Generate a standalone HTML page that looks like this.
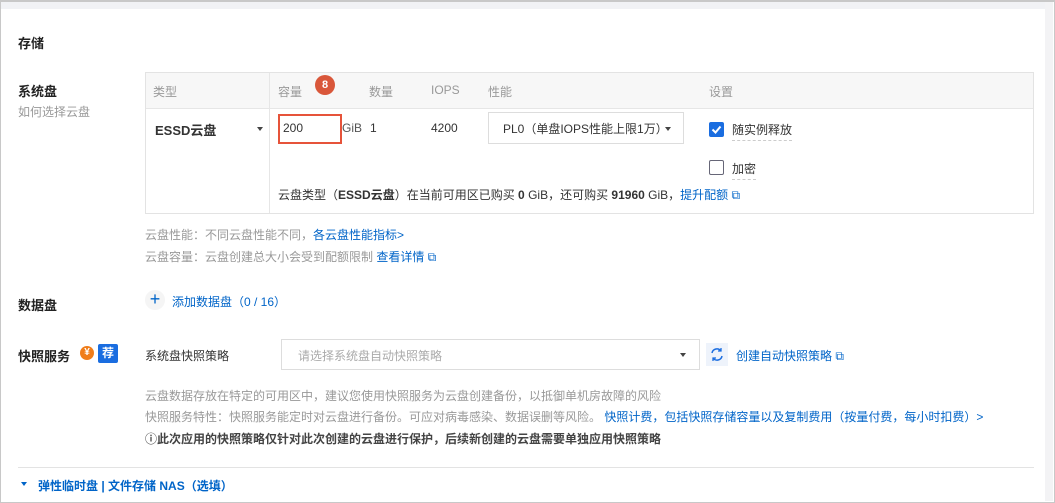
<!DOCTYPE html>
<html><head><meta charset="utf-8"><style>
*{margin:0;padding:0;box-sizing:border-box}
body{width:1055px;height:503px;background:#fff;font-family:"Liberation Sans","Noto Sans CJK SC",sans-serif;font-size:12px;color:#333;position:relative;overflow:hidden}
.a{position:absolute;white-space:nowrap}
.g{color:#999}.b{color:#0064c8}.k{color:#333}
.h{font-weight:bold;font-size:13px;color:#222}
.t{position:absolute;width:0;height:0;border-left:3px solid transparent;border-right:3px solid transparent;border-top:4px solid #444}
</style></head><body>
<div class="a" style="left:0;top:0;width:1055px;height:503px;border:1px solid #c8c8c8;border-top:2px solid #c8c8c8"></div>
<div class="a" style="left:1px;top:2px;width:1052px;height:7px;background:#f1f2f5"></div>
<div class="a" style="left:1045px;top:2px;width:8px;height:499px;background:#f3f3f5"></div>

<div class="a h" style="left:18px;top:33px">存储</div>
<div class="a h" style="left:18px;top:81px">系统盘</div>
<div class="a g" style="left:18px;top:103px">如何选择云盘</div>

<div class="a" style="left:145px;top:72px;width:889px;height:142px;border:1px solid #e3e3e3"></div>
<div class="a" style="left:146px;top:73px;width:887px;height:36px;background:#f7f7f7;border-bottom:1px solid #e6e6e6"></div>
<div class="a" style="left:269px;top:73px;width:1px;height:140px;background:#e6e6e6"></div>
<div class="a g" style="left:153px;top:83px">类型</div>
<div class="a g" style="left:278px;top:83px">容量</div>
<div class="a" style="left:315px;top:75px;width:20px;height:20px;border-radius:50%;background:#d9573a;color:#fff;font-size:11px;font-weight:bold;text-align:center;line-height:20px">8</div>
<div class="a g" style="left:369px;top:83px">数量</div>
<div class="a g" style="left:431px;top:83px">IOPS</div>
<div class="a g" style="left:488px;top:83px">性能</div>
<div class="a g" style="left:709px;top:83px">设置</div>

<div class="a" style="left:155px;top:120px;font-weight:bold;font-size:13px">ESSD云盘</div>
<div class="t" style="left:257px;top:127px"></div>
<div class="a" style="left:278px;top:114px;width:64px;height:30px;border:2px solid #e6533a"></div>
<div class="a" style="left:283px;top:121px">200</div>
<div class="a" style="left:342px;top:121px;color:#555">GiB</div>
<div class="a" style="left:370px;top:121px">1</div>
<div class="a" style="left:431px;top:121px">4200</div>
<div class="a" style="left:488px;top:112px;width:196px;height:32px;border:1px solid #ddd"></div>
<div class="a" style="left:503px;top:120px">PL0（单盘IOPS性能上限1万）</div>
<div class="t" style="left:665px;top:127px"></div>
<div class="a" style="left:709px;top:122px;width:15px;height:15px;background:#1a6de0;border-radius:2px"><svg width="15" height="15"><path d="M3.5 7.5l3 3 5-6" stroke="#fff" stroke-width="2" fill="none"/></svg></div>
<div class="a" style="left:732px;top:121px;border-bottom:1px dashed #ccc;padding-bottom:2px">随实例释放</div>
<div class="a" style="left:709px;top:160px;width:15px;height:15px;border:1px solid #667;border-radius:2px"></div>
<div class="a" style="left:732px;top:160px;border-bottom:1px dashed #ccc;padding-bottom:2px">加密</div>
<div class="a" style="left:278px;top:186px">云盘类型（<b>ESSD云盘</b>）在当前可用区已购买 <b>0</b> GiB，还可购买 <b>91960</b> GiB，<span class="b">提升配额 ⧉</span></div>

<div class="a g" style="left:145px;top:226px">云盘性能：不同云盘性能不同，<span class="b">各云盘性能指标&gt;</span></div>
<div class="a g" style="left:145px;top:248px">云盘容量：云盘创建总大小会受到配额限制 <span class="b">查看详情 ⧉</span></div>

<div class="a h" style="left:18px;top:295px">数据盘</div>
<div class="a" style="left:145px;top:290px;width:20px;height:20px;border-radius:50%;background:#f5f5f5;color:#0064c8;font-size:18px;text-align:center;line-height:19px">+</div>
<div class="a b" style="left:172px;top:293px">添加数据盘（0 / 16）</div>

<div class="a h" style="left:18px;top:346px">快照服务</div>
<div class="a" style="left:80px;top:346px;width:14px;height:14px;border-radius:50%;background:#f07d1a;color:#fff;font-size:10px;font-weight:bold;text-align:center;line-height:14px">¥</div>
<div class="a" style="left:98px;top:344px;width:20px;height:19px;background:#1a6de0;color:#fff;font-size:12px;font-weight:bold;text-align:center;line-height:19px;border-radius:2px">荐</div>
<div class="a k" style="left:145px;top:347px">系统盘快照策略</div>
<div class="a" style="left:281px;top:339px;width:419px;height:31px;border:1px solid #ddd"></div>
<div class="a" style="left:298px;top:347px;color:#aaa">请选择系统盘自动快照策略</div>
<div class="t" style="left:680px;top:353px"></div>
<div class="a" style="left:706px;top:343px;width:22px;height:23px;background:#eef3fb"><svg width="22" height="23"><path d="M6 10a5 5 0 0 1 9-2M16 13a5 5 0 0 1-9 2" stroke="#1a6de0" stroke-width="1.5" fill="none"/><path d="M15 5v3h-3M7 18v-3h3" stroke="#1a6de0" stroke-width="1.3" fill="none"/></svg></div>
<div class="a b" style="left:736px;top:347px">创建自动快照策略 ⧉</div>

<div class="a g" style="left:145px;top:387px">云盘数据存放在特定的可用区中，建议您使用快照服务为云盘创建备份，以抵御单机房故障的风险</div>
<div class="a g" style="left:145px;top:408px">快照服务特性：快照服务能定时对云盘进行备份。可应对病毒感染、数据误删等风险。 <span class="b">快照计费，包括快照存储容量以及复制费用（按量付费，每小时扣费）&gt;</span></div>
<div class="a" style="left:145px;top:430px;font-weight:bold;color:#444">ⓘ此次应用的快照策略仅针对此次创建的云盘进行保护，后续新创建的云盘需要单独应用快照策略</div>

<div class="a" style="left:18px;top:467px;width:1016px;height:1px;background:#e3e3e3"></div>
<div class="t" style="left:21px;top:482px;border-top-color:#0064c8"></div>
<div class="a b" style="left:38px;top:477px;font-weight:bold">弹性临时盘 | 文件存储 NAS（选填）</div>
</body></html>
